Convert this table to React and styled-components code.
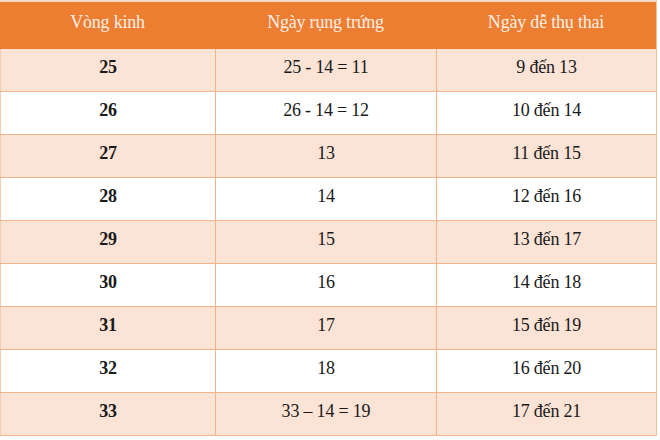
import React from "react";
import styled, { createGlobalStyle } from "styled-components";

const Global = createGlobalStyle`
  html, body { margin: 0; padding: 0; background: #ffffff; }
  body { font-family: "Liberation Serif", "Times New Roman", serif; }
`;

const Table = styled.div`
  width: 656px;
  border-top: 2px solid #f9dcc6;
  border-right: 1px solid #f1c3a2;
  display: flex;
  flex-direction: column;
`;

const Row = styled.div`
  display: grid;
  grid-template-columns: 215px 221px 1fr;
  height: ${(p) => (p.$head ? "47px" : "43px")};
  box-sizing: border-box;
  background: ${(p) => (p.$head ? "#ed7d31" : p.$alt ? "#fbe3d5" : "#ffffff")};
  border-bottom: ${(p) => (p.$head ? "none" : "1px solid #f3b48a")};
`;

const Cell = styled.div`
  display: flex;
  align-items: center;
  justify-content: center;
  padding-bottom: ${(p) => (p.$head ? "6px" : "5px")};
  font-size: 18px;
  color: ${(p) => (p.$head ? "#fdf0e6" : "#1a1a1a")};
  font-weight: ${(p) => (p.$bold ? 700 : 400)};
  border-left: ${(p) => (p.$head ? "none" : p.$first ? "1px solid #f5cdb0" : "1px solid #f3b48a")};
  letter-spacing: -0.2px;
`;

const rows = [
  ["25", "25 - 14 = 11", "9 đến 13"],
  ["26", "26 - 14 = 12", "10 đến 14"],
  ["27", "13", "11 đến 15"],
  ["28", "14", "12 đến 16"],
  ["29", "15", "13 đến 17"],
  ["30", "16", "14 đến 18"],
  ["31", "17", "15 đến 19"],
  ["32", "18", "16 đến 20"],
  ["33", "33 – 14 = 19", "17 đến 21"],
];

export default function App() {
  return (
    <>
      <Global />
      <Table>
        <Row $head>
          <Cell $head>Vòng kinh</Cell>
          <Cell $head>Ngày rụng trứng</Cell>
          <Cell $head>Ngày dễ thụ thai</Cell>
        </Row>
        {rows.map((r, i) => (
          <Row key={r[0]} $alt={i % 2 === 0}>
            <Cell $first $bold>{r[0]}</Cell>
            <Cell>{r[1]}</Cell>
            <Cell>{r[2]}</Cell>
          </Row>
        ))}
      </Table>
    </>
  );
}
